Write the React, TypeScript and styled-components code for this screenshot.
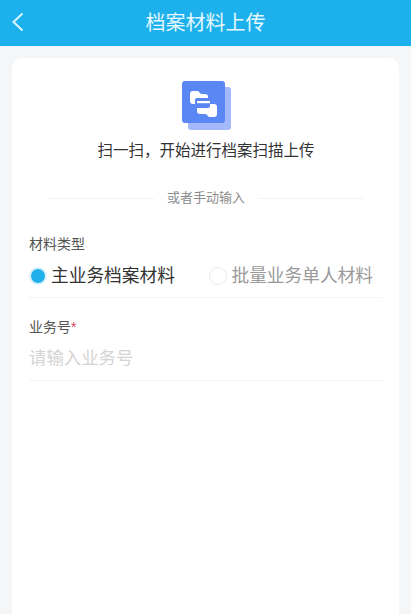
import React from "react";
import styled, { createGlobalStyle } from "styled-components";

const GlobalStyle = createGlobalStyle`
  html, body {
    margin: 0;
    padding: 0;
    height: 100%;
    background: #f5f6f8;
    overflow: hidden;
  }
  body {
    font-family: "Liberation Sans", "Noto Sans CJK SC", sans-serif;
  }
`;

const Page = styled.div`
  width: 411px;
  height: 614px;
  display: flex;
  flex-direction: column;
  overflow: hidden;
  background: #f5f6f8;
`;
const Header = styled.header`
  position: relative;
  flex: none;
  box-sizing: border-box;
  height: 46px;
  padding-bottom: 4px;
  display: flex;
  align-items: center;
  justify-content: center;
  background: #1cb1ec;
  color: #e6f7ff;
  font-size: 20px;
`;
const Back = styled.svg`
  position: absolute;
  left: 10px;
  top: 11px;
  width: 16px;
  height: 22px;
`;
const Card = styled.main`
  flex: 1;
  margin: 12px 12px 0;
  padding: 23px 16px 0 17px;
  background: #fff;
  border-radius: 10px 10px 0 0;
  display: flex;
  flex-direction: column;
`;
const Scan = styled.div`
  display: flex;
  flex-direction: column;
  align-items: center;
`;
const ScanIcon = styled.svg`
  width: 50px;
  height: 50px;
  margin-left: 1px;
`;
const ScanText = styled.div`
  margin-top: 9px;
  font-size: 15.5px;
  line-height: 22px;
  color: #333;
`;
const Divider = styled.div`
  margin: 27px 19px 0;
  display: flex;
  align-items: center;
  gap: 13px;
  font-size: 13px;
  line-height: 18px;
  color: #8c8c8c;
  &::before,
  &::after {
    content: "";
    flex: 1;
    height: 1px;
    background: #f2f2f2;
  }
`;
const Label = styled.div`
  font-size: 14px;
  line-height: 20px;
  color: #555;
`;
const Required = styled.span`
  color: #d9455f;
`;
const TypeField = styled.section`
  margin-top: 27px;
  padding-bottom: 9px;
  border-bottom: 1px solid #f4f4f4;
`;
const Options = styled.div`
  margin-top: 10px;
  display: flex;
  justify-content: space-between;
  padding-right: 10px;
`;
const Option = styled.div<{ $active?: boolean }>`
  display: flex;
  align-items: center;
  gap: 5px;
  font-size: 17.7px;
  line-height: 24px;
  color: ${(p) => (p.$active ? "#333" : "#9a9a9a")};
`;
const Radio = styled.span<{ $active?: boolean }>`
  box-sizing: border-box;
  width: 18px;
  height: 18px;
  margin-right: -1px;
  border-radius: 50%;
  background: ${(p) => (p.$active ? "#1fb0ec" : "#fff")};
  border: ${(p) => (p.$active ? "2px solid #d8f2fc" : "1.5px solid #e8e8e8")};
`;
const NumberField = styled.section`
  margin-top: 19px;
  padding-bottom: 10px;
  border-bottom: 1px solid #f4f4f4;
`;
const Placeholder = styled.div`
  margin-top: 9px;
  font-size: 17.4px;
  line-height: 24px;
  color: #d4d4d4;
`;

export default function App() {
  return (
    <Page>
      <GlobalStyle />
      <Header>
        <Back viewBox="0 0 16 22" fill="none">
          <path d="M12.5 2.5 3.5 11l9 8.5" stroke="#d9f5ff" strokeWidth="2" />
        </Back>
        档案材料上传
      </Header>
      <Card>
        <Scan>
          <ScanIcon viewBox="0 0 50 50">
            <rect x="6" y="6" width="43" height="43" rx="3" fill="#a3b9fb" />
            <rect x="0" y="0" width="43" height="42" rx="3" fill="#5b87f4" />
            <path
              d="M8 13a3 3 0 0 1 3-3h5l3 3h4a3 3 0 0 1 3 3v1H15a2 2 0 0 0-2 2v4h-2a3 3 0 0 1-3-3z"
              fill="#fff"
            />
            <path d="M15 20h13v2.2H15z" fill="#fff" />
            <path
              d="M35 33a3 3 0 0 1-3 3h-5l-3-3h-6a3 3 0 0 1-3-3v-3h11a2 2 0 0 0 2-2v-2h4a3 3 0 0 1 3 3z"
              fill="#fff"
            />
          </ScanIcon>
          <ScanText>扫一扫，开始进行档案扫描上传</ScanText>
        </Scan>
        <Divider>或者手动输入</Divider>
        <TypeField>
          <Label>材料类型</Label>
          <Options>
            <Option $active>
              <Radio $active />
              主业务档案材料
            </Option>
            <Option>
              <Radio />
              批量业务单人材料
            </Option>
          </Options>
        </TypeField>
        <NumberField>
          <Label>
            业务号<Required>*</Required>
          </Label>
          <Placeholder>请输入业务号</Placeholder>
        </NumberField>
      </Card>
    </Page>
  );
}
